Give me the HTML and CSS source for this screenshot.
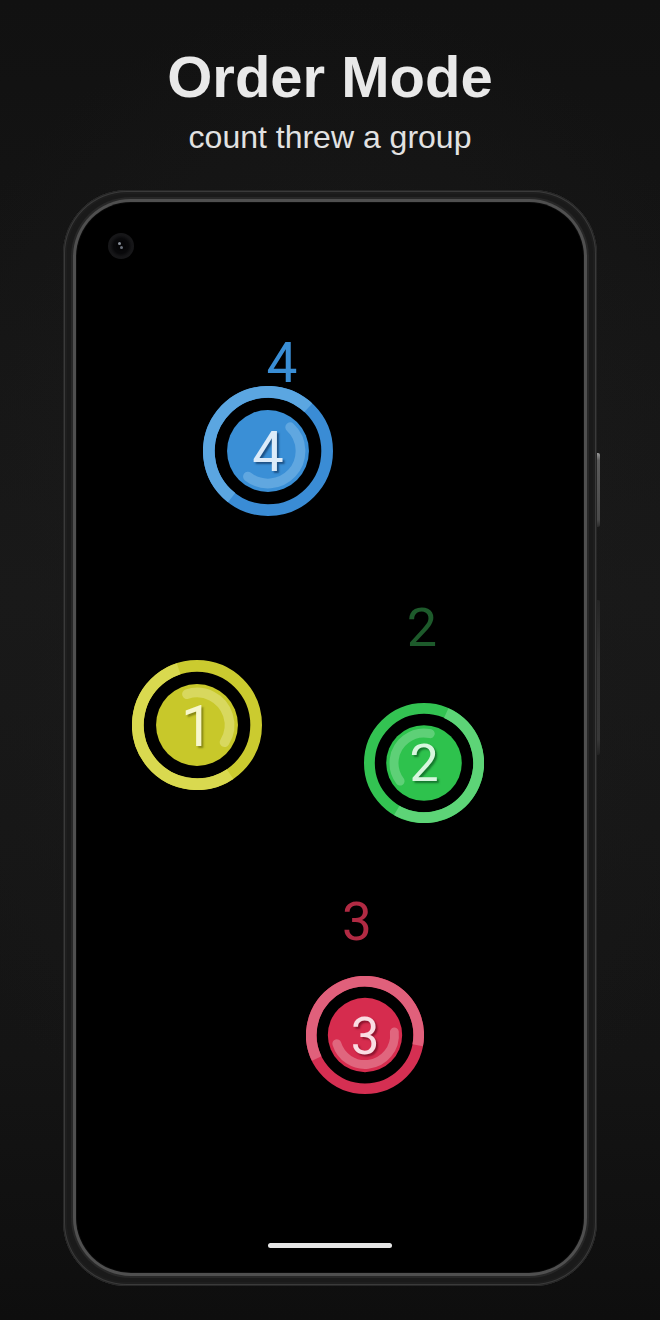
FILE: index.html
```html
<!DOCTYPE html>
<html lang="en">
<head>
<meta charset="utf-8">
<title>Order Mode</title>
<link rel="stylesheet" href="styles.css">
</head>
<body>
<header class="hero">
  <h1 class="title">Order Mode</h1>
  <p class="subtitle">count threw a group</p>
</header>
<div class="phone">
  <span class="btn btn-power"></span>
  <span class="btn btn-volume"></span>
  <div class="screen">
    <div class="camera"><span class="lens"><i class="dot dot-a"></i><i class="dot dot-b"></i></span></div>

    <span class="label label-blue">4</span>
    <span class="label label-green">2</span>
    <span class="label label-red">3</span>

    <div class="marker marker-yellow">
      <svg viewBox="-100 -100 200 200" aria-hidden="true">
        <circle class="ring" r="91"/>
        <circle class="ring ring-light" r="91" pathLength="360" stroke-dasharray="196 360" transform="rotate(56)"/>
        <circle class="disc" r="63"/>
        <circle class="arc" r="50" pathLength="360" stroke-dasharray="140 360" transform="rotate(252)"/>
      </svg>
      <span class="num">1</span>
    </div>

    <div class="marker marker-blue">
      <svg viewBox="-100 -100 200 200" aria-hidden="true">
        <circle class="ring" r="91"/>
        <circle class="ring ring-light" r="91" pathLength="360" stroke-dasharray="185 360" transform="rotate(128)"/>
        <circle class="disc" r="63"/>
        <circle class="arc" r="50" pathLength="360" stroke-dasharray="175 360" transform="rotate(-47)"/>
      </svg>
      <span class="num">4</span>
    </div>

    <div class="marker marker-green">
      <svg viewBox="-100 -100 200 200" aria-hidden="true">
        <circle class="ring" r="91"/>
        <circle class="ring ring-light" r="91" pathLength="360" stroke-dasharray="186 360" transform="rotate(-66)"/>
        <circle class="disc" r="63"/>
        <circle class="arc" r="50" pathLength="360" stroke-dasharray="139 360" transform="rotate(143)"/>
      </svg>
      <span class="num">2</span>
    </div>

    <div class="marker marker-red">
      <svg viewBox="-100 -100 200 200" aria-hidden="true">
        <circle class="ring" r="91"/>
        <circle class="ring ring-light" r="91" pathLength="360" stroke-dasharray="217 360" transform="rotate(154)"/>
        <circle class="disc" r="63"/>
        <circle class="arc" r="50" pathLength="360" stroke-dasharray="169 360" transform="rotate(-6)"/>
      </svg>
      <span class="num">3</span>
    </div>

    <div class="home-bar"></div>
  </div>
</div>
</body>
</html>
```

FILE: styles.css
```css
* { box-sizing: border-box; }

html, body { margin: 0; padding: 0; }

body {
  width: 660px;
  height: 1320px;
  overflow: hidden;
  background:
    radial-gradient(ellipse 70% 45% at 50% 45%, #1b1b1b 0%, rgba(27,27,27,0) 100%),
    linear-gradient(180deg, #111111 0%, #181818 45%, #141414 80%, #0e0e0e 100%);
  font-family: "Liberation Sans", Arial, sans-serif;
  display: flex;
  flex-direction: column;
  align-items: center;
}

.hero {
  padding-top: 44px;
  display: flex;
  flex-direction: column;
  align-items: center;
  gap: 8px;
}

.title {
  margin: 0;
  font-size: 58px;
  line-height: 66px;
  font-weight: 700;
  color: #e9e9e9;
}

.subtitle {
  margin: 0;
  font-size: 32px;
  line-height: 38px;
  font-weight: 400;
  color: #e2e2e2;
}

.phone {
  position: relative;
  margin-top: 34px;
  width: 534px;
  height: 1096px;
  border-radius: 64px;
  padding: 13px 14px 14px 14px;
  background: #1a1a1a;
  box-shadow:
    inset 0 0 0 1px #262626,
    inset 0 0 0 2px #3a3a3a,
    inset 0 0 0 4px #1e1e1e;
}

.btn {
  position: absolute;
  right: -3px;
  width: 3px;
  border-radius: 0 2px 2px 0;
}

.btn-power {
  top: 263px;
  height: 74px;
  background: linear-gradient(180deg, #9a9a9a 0%, #5a5a5a 10%, #4a4a4a 90%, #2a2a2a 100%);
}

.btn-volume {
  top: 410px;
  height: 155px;
  background: linear-gradient(180deg, #242424 0%, #343434 40%, #383838 90%, #222222 100%);
}

.screen {
  position: relative;
  width: 100%;
  height: 100%;
  border-radius: 54px;
  background: #000;
  box-shadow:
    0 0 0 1px #0a0a0a,
    0 0 0 4px #4f4f4f,
    0 0 0 6px #272727;
  display: flex;
  flex-direction: column;
  justify-content: flex-end;
  align-items: center;
  padding-bottom: 24px;
}

.camera {
  position: absolute;
  left: 31px;
  top: 30px;
  width: 26px;
  height: 26px;
  border-radius: 50%;
  background: radial-gradient(circle, #08080a 0 40%, #151517 58%, #1d1d1f 100%);
  display: flex;
  align-items: center;
  justify-content: center;
}

.lens {
  position: relative;
  width: 10px;
  height: 10px;
  border-radius: 50%;
  background: #060608;
}

.dot {
  position: absolute;
  width: 3px;
  height: 3px;
  border-radius: 50%;
  background: #8a909a;
}

.dot-a { left: 2px; top: 1px; }
.dot-b { left: 4px; top: 5px; background: #6c727c; }

.home-bar {
  width: 124px;
  height: 5px;
  border-radius: 3px;
  background: #e6e6e6;
}

/* Floating order labels */
.label {
  position: absolute;
  font-family: Roboto, "Noto Sans", sans-serif;
  font-weight: 400;
  line-height: 1;
  transform: translate(-50%, -50%);
}

.label-blue  { left: 205px; top: 160px; font-size: 55px; color: #3a8ed5; }
.label-green { left: 345px; top: 425px; font-size: 54px; color: #1d5a2b; }
.label-red   { left: 280px; top: 719px; font-size: 53px; color: #b12a43; }

/* Touch markers */
.marker {
  position: absolute;
}

.marker svg {
  display: block;
  width: 100%;
  height: 100%;
}

.marker .ring {
  fill: none;
  stroke-width: 18;
}

.marker .arc {
  fill: none;
  stroke-width: 15;
  stroke-linecap: round;
}

.num {
  position: absolute;
  inset: 0;
  display: flex;
  align-items: center;
  justify-content: center;
  font-family: Roboto, "Noto Sans", sans-serif;
  font-weight: 400;
  line-height: 1;
  padding-top: 2px;
}

.marker-yellow { left: 55px;  top: 457px; width: 130px; height: 130px; }
.marker-blue   { left: 126px; top: 183px; width: 130px; height: 130px; }
.marker-green  { left: 287px; top: 500px; width: 120px; height: 120px; }
.marker-red    { left: 229px; top: 773px; width: 118px; height: 118px; }

.marker-yellow .ring { stroke: #cbcb2f; }
.marker-yellow .ring-light { stroke: #d9d94f; }
.marker-yellow .disc { fill: #c8c82a; }
.marker-yellow .arc { stroke: #d8d85e; }
.marker-yellow .num { font-size: 57px; color: #f7f7cc; text-shadow: 2px 2px 2px rgba(80, 80, 0, 0.55); }

.marker-blue .ring { stroke: #3a8cd5; }
.marker-blue .ring-light { stroke: #5ba6e1; }
.marker-blue .disc { fill: #3a8fd6; }
.marker-blue .arc { stroke: #60a7e0; }
.marker-blue .num { font-size: 56px; color: #dcebf9; text-shadow: 2px 2px 2px rgba(10, 40, 80, 0.6); }

.marker-green .ring { stroke: #33c352; }
.marker-green .ring-light { stroke: #5dd477; }
.marker-green .disc { fill: #2ec24d; }
.marker-green .arc { stroke: #5ed077; }
.marker-green .num { font-size: 52px; color: #d8f6de; text-shadow: 2px 2px 2px rgba(0, 60, 20, 0.55); }

.marker-red .ring { stroke: #d52f52; }
.marker-red .ring-light { stroke: #e0607b; }
.marker-red .disc { fill: #d62c4e; }
.marker-red .arc { stroke: #e0667e; }
.marker-red .num { font-size: 51px; color: #fadde3; text-shadow: 2px 2px 2px rgba(80, 0, 20, 0.55); }
```
